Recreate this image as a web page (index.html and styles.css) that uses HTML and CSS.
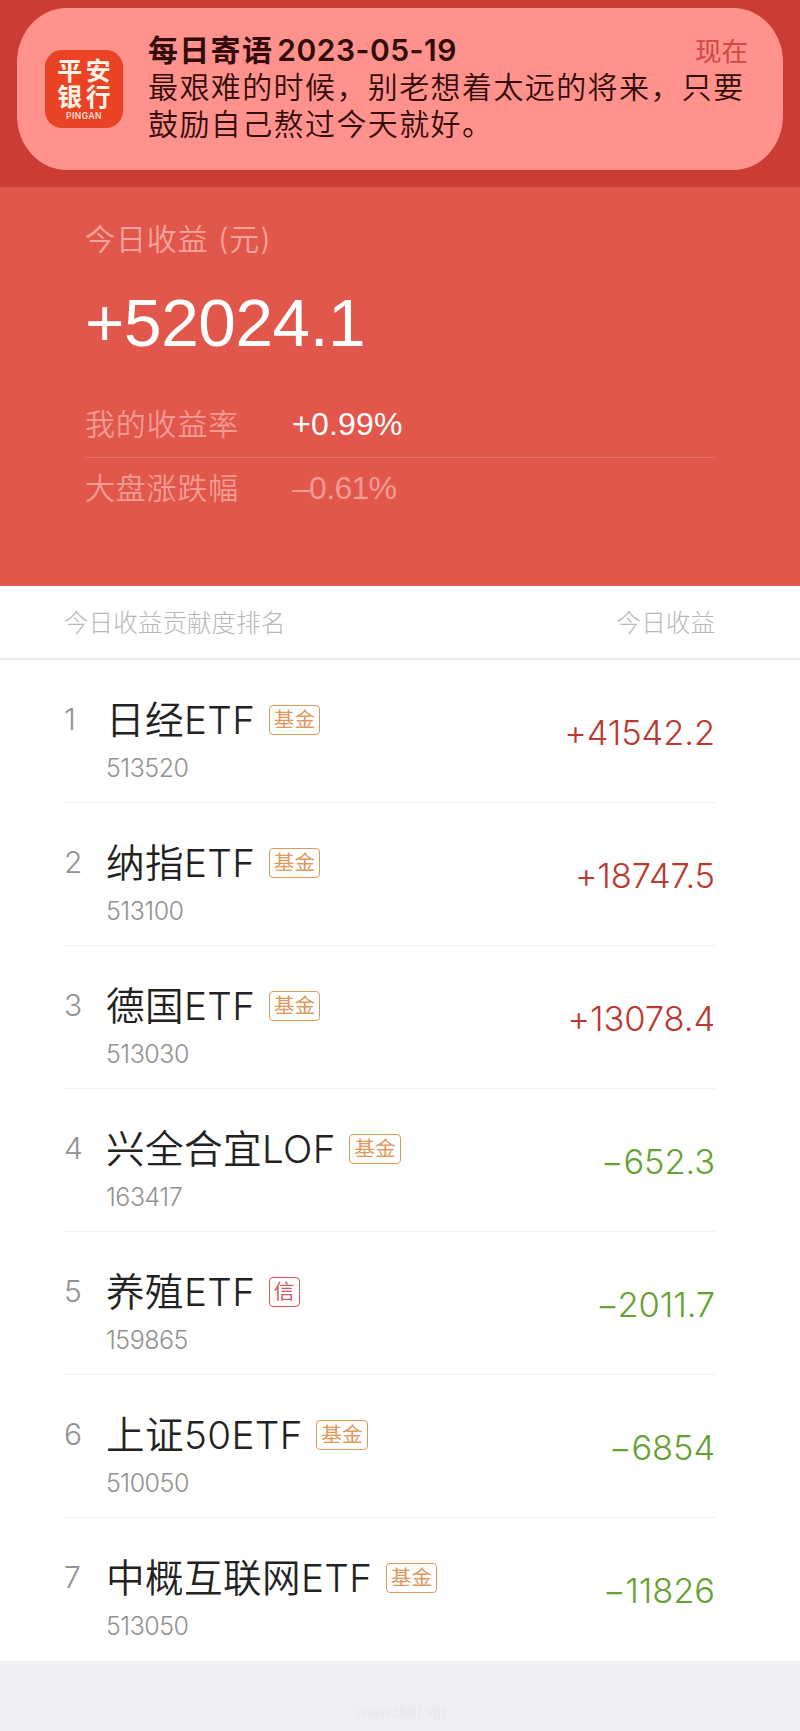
FILE: index.html
```
<!DOCTYPE html>
<html lang="zh-CN">
<head>
<meta charset="utf-8">
<title>今日收益</title>
<link rel="stylesheet" href="styles.css">
</head>
<body>
<div class="top">
  <section class="notice">
    <div class="app"><span class="app-cn">平安<br>银行</span><span class="app-en">PINGAN</span></div>
    <div class="notice-body">
      <div class="notice-head"><strong class="notice-title">每日寄语<span class="date">2023-05-19</span></strong><time class="now">现在</time></div>
      <p class="notice-text">最艰难的时候，别老想着太远的将来，只要<br>鼓励自己熬过今天就好。</p>
    </div>
  </section>
</div>
<section class="hero">
  <div class="hero-label">今日收益 (元)</div>
  <div class="hero-total">+52024.1</div>
  <div class="stat"><span class="stat-label">我的收益率</span><span class="stat-value">+0.99%</span></div>
  <div class="stat stat-dim"><span class="stat-label">大盘涨跌幅</span><span class="stat-value">–0.61%</span></div>
</section>
<div class="thead"><span>今日收益贡献度排名</span><span>今日收益</span></div>
<main class="list">
  <div class="row"><span class="rank">1</span><div class="fund"><div class="line"><span class="name">日经ETF</span><span class="tag">基金</span></div><div class="code">513520</div></div><span class="value up">+41542.2</span></div>
  <div class="row"><span class="rank">2</span><div class="fund"><div class="line"><span class="name">纳指ETF</span><span class="tag">基金</span></div><div class="code">513100</div></div><span class="value up">+18747.5</span></div>
  <div class="row"><span class="rank">3</span><div class="fund"><div class="line"><span class="name">德国ETF</span><span class="tag">基金</span></div><div class="code">513030</div></div><span class="value up">+13078.4</span></div>
  <div class="row"><span class="rank">4</span><div class="fund"><div class="line"><span class="name">兴全合宜LOF</span><span class="tag">基金</span></div><div class="code">163417</div></div><span class="value down">−652.3</span></div>
  <div class="row"><span class="rank">5</span><div class="fund"><div class="line"><span class="name">养殖ETF</span><span class="tag tag-red">信</span></div><div class="code">159865</div></div><span class="value down">−2011.7</span></div>
  <div class="row"><span class="rank">6</span><div class="fund"><div class="line"><span class="name">上证50ETF</span><span class="tag">基金</span></div><div class="code">510050</div></div><span class="value down">−6854</span></div>
  <div class="row"><span class="rank">7</span><div class="fund"><div class="line"><span class="name">中概互联网ETF</span><span class="tag">基金</span></div><div class="code">513050</div></div><span class="value down">−11826</span></div>
</main>
<footer class="foot">www.ddrj.vip</footer>
</body>
</html>
```

FILE: styles.css
```
* { box-sizing: border-box; }
body {
  margin: 0;
  width: 800px;
  height: 1731px;
  display: flex;
  flex-direction: column;
  overflow: hidden;
  background: #efeef3;
  font-family: Inter, "Noto Sans CJK SC", sans-serif;
  font-weight: 300;
  white-space: nowrap;
}
.top { height: 187px; padding: 8px 17px 0; background: #cb3c34; }
.notice {
  height: 162px;
  display: flex;
  padding: 24px 36px 0 28px;
  gap: 25px;
  border-radius: 50px / 54px;
  background: #ff928d;
  color: #330b0a;
}
.app {
  width: 78px;
  height: 78px;
  margin-top: 18px;
  padding-top: 8px;
  border-radius: 17px;
  background: #e94225;
  color: #fff3e6;
  display: flex;
  flex-direction: column;
  align-items: center;
}
.app-cn { font-size: 25px; line-height: 26px; font-weight: 700; letter-spacing: 3.5px; margin-right: -3.5px; }
.app-en { font-size: 8.5px; line-height: 12px; font-weight: 500; letter-spacing: .5px; }
.notice-body { flex: 1; }
.notice-head { display: flex; justify-content: space-between; height: 37px; line-height: 37px; }
.notice-title { font-size: 30px; font-weight: 600; letter-spacing: 1.3px; }
.date { margin-left: 4px; letter-spacing: .5px; }
.now { color: #cf4a44; font-size: 26.5px; font-weight: 400; line-height: 39px; margin-right: -1px; }
.notice-text { margin: 0 -10px 0 0; font-size: 30px; line-height: 37px; letter-spacing: 1.2px; font-weight: 350; letter-spacing: 1.4px; }

.hero {
  height: 399px;
  padding: 32px 85px 0;
  background: #e2574c;
  color: #fff;
  display: flex;
  flex-direction: column;
}
.hero-label { height: 40px; line-height: 40px; font-size: 30px; font-weight: 350; letter-spacing: .9px; color: #f5a49c; }
.hero-total { margin-top: 24px; height: 80px; line-height: 80px; font-family: "Liberation Sans", sans-serif; font-size: 67.5px; letter-spacing: -.4px; }
.stat { display: flex; height: 64px; line-height: 60px; }
.hero-total + .stat { margin-top: 29px; height: 66px; line-height: 65px; border-bottom: 1px solid #ea7067; }
.stat-label { width: 207px; font-size: 30px; font-weight: 350; letter-spacing: .8px; color: #f19b93; }
.stat-value { font-family: "Liberation Sans", sans-serif; font-size: 32px; letter-spacing: .2px; }
.stat-dim .stat-value { color: #f19b93; letter-spacing: -.7px; }

.thead {
  height: 74px;
  padding: 0 85px 2px 64px;
  display: flex;
  justify-content: space-between;
  align-items: center;
  border-bottom: 2px solid #ebebed;
  background: #fff;
  color: #b8b8b8;
  font-size: 24.6px;
}
.list { height: 1001px; padding: 0 85px 0 64px; background: #fff; display: grid; grid-template-rows: repeat(7, 1fr); }
.row { display: flex; border-bottom: 1px solid #f0f0f0; }
.row:last-child { border: 0; }
.rank { width: 42px; padding-top: 39px; line-height: 40px; font-size: 30px; color: #929292; }
.fund { flex: 1; padding-top: 34px; }
.line { display: flex; align-items: center; height: 52px; gap: 13.5px; }
.name { font-size: 38.6px; line-height: 52px; color: #222; font-weight: 350; letter-spacing: .4px; }
.tag {
  height: 30px;
  padding: 0 4px;
  border: 1.5px solid #e0985a;
  border-radius: 4px;
  color: #e0985a;
  font-size: 20.7px;
  line-height: 27px;
  font-weight: 400;
}
.tag-red { border-color: #d3595c; color: #d3595c; }
.code { height: 30px; margin-top: 7px; line-height: 30px; font-size: 25px; letter-spacing: -.5px; color: #929292; }
.value { padding-top: 53px; line-height: 40px; font-size: 34.5px; font-weight: 350; letter-spacing: -.1px; }
.up { color: #bb3930; }
.down { color: #67a132; }
.foot { height: 70px; padding: 41px 0 0 2px; line-height: 20px; text-align: center; font-family: "Liberation Sans", sans-serif; font-size: 16px; font-weight: 400; color: #e9e8ed; }
```
